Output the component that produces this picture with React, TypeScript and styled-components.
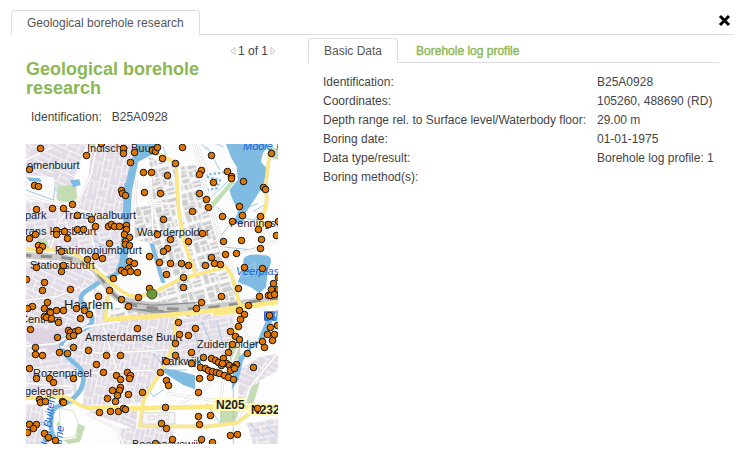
import React from "react";
import styled, { createGlobalStyle, css } from "styled-components";

const GlobalStyle = createGlobalStyle`
  * { box-sizing: border-box; }
  body {
    margin: 0;
    background: #fff;
    color: #444;
    font-family: "Liberation Sans", Arial, sans-serif;
    font-size: 12px;
    line-height: 19px;
  }
`;

const Page = styled.div`
  padding: 10px 6px 0 11px;
`;

const TopBar = styled.header`
  display: flex;
  justify-content: space-between;
  align-items: flex-start;
  border-bottom: 1px solid #ddd;
`;

const TabList = styled.div`
  display: flex;
  gap: 2px;
  border-bottom: 1px solid #ddd;
`;

const Tab = styled.button<{ $active?: boolean }>`
  height: 24px;
  padding: 0 15px;
  border: 1px solid transparent;
  border-bottom: 0;
  border-radius: 4px 4px 0 0;
  background: transparent;
  font: inherit;
  line-height: 22px;
  color: #8cb755;
  white-space: nowrap;
  cursor: pointer;
  ${(p) =>
    p.$active
      ? css`
          height: 25px;
          margin-bottom: -1px;
          border-color: #ddd;
          background: #fff;
          color: #555;
        `
      : css`
          -webkit-text-stroke: 0.4px #8cb755;
        `}
`;

const CloseButton = styled.button`
  display: flex;
  padding: 4px 3px;
  border: 0;
  background: transparent;
  cursor: pointer;
`;

const Content = styled.main`
  display: grid;
  grid-template-columns: 252px minmax(0, 1fr);
  gap: 30px;
  padding: 3px 15px 15px;
`;

const Summary = styled.section`
  padding-top: 4px;
`;

const Pager = styled.nav`
  display: flex;
  justify-content: flex-end;
  align-items: center;
  gap: 2px;
  height: 18px;
  padding-right: 2px;
`;

const PagerButton = styled.button`
  display: flex;
  padding: 0;
  border: 0;
  background: transparent;
  cursor: pointer;
`;

const Title = styled.h1`
  margin: 0;
  max-width: 200px;
  font-size: 18px;
  line-height: 19px;
  font-weight: bold;
  color: #8cb755;
`;

const SummaryFields = styled.dl`
  display: flex;
  gap: 10px;
  margin: 10px 0 17px;
  padding: 0 5px;
`;

const FieldName = styled.dt``;

const FieldValue = styled.dd`
  margin: 0;
`;

const DataTable = styled.table`
  width: 100%;
  margin-top: 10px;
  border-collapse: collapse;
`;

const DataLabel = styled.th`
  padding: 0 0 0 15px;
  font-weight: normal;
  text-align: left;
  white-space: nowrap;
`;

const DataValue = styled.td`
  width: 122px;
  padding: 0;
  white-space: nowrap;
`;

const MapSvg = styled.svg`
  display: block;
  width: 100%;
  height: auto;
`;

const MapLabel = styled.text<{ $kind?: "water" | "city" | "road" }>`
  font-family: "Liberation Sans", Arial, sans-serif;
  font-size: ${(p) => (p.$kind === "city" ? 13 : p.$kind === "road" ? 12 : 11)}px;
  font-weight: ${(p) => (p.$kind === "road" ? "bold" : "normal")};
  font-style: ${(p) => (p.$kind === "water" ? "italic" : "normal")};
  fill: ${(p) => (p.$kind === "water" ? "#1266d8" : "#1c1c1c")};
`;

const basicData: [string, string][] = [
  ["Identification:", "B25A0928"],
  ["Coordinates:", "105260, 488690 (RD)"],
  ["Depth range rel. to Surface level/Waterbody floor:", "29.00 m"],
  ["Boring date:", "01-01-1975"],
  ["Data type/result:", "Borehole log profile: 1"],
  ["Boring method(s):", ""],
];

/* Borehole positions, one "x,y" pair each. */
const boreholes = `
40,148 86,155 101,143 29,169 34,185 38,186 72,204 52,208 63,208 36,209 77,215 91,219 123,148 123,153 134,152 130,162
143,172 121,190 122,193 125,195 144,192 152,150 155,151 157,147 182,147 162,158 175,163 211,155 271,153 151,172
167,175 201,170 199,174 227,171 231,176 231,178 243,181 213,182 160,193 199,193 206,199 208,207 192,211 239,206
263,187 265,189 222,216 242,215 260,216 163,219 232,221 95,226 77,229 83,229 56,230 56,234 64,231 67,238 35,234
29,238 38,245 42,246 39,250 61,251 87,259 95,256 102,258 63,265 61,271 36,267 44,282 42,290 70,289 108,226 111,224
114,226 119,226 126,225 126,229 124,234 129,237 125,241 125,244 129,245 109,243 129,261 134,263 128,268 121,270
124,272 130,271 137,272 113,278 109,290 149,256 149,288 26,279 98,296 202,233 157,234 170,239 188,241 167,248 163,251
159,262 170,263 181,263 188,265 205,265 211,257 214,263 220,264 166,274 183,277 183,287 225,254 236,253 223,241
241,240 260,248 261,239 258,229 268,224 276,235 278,221 244,267 262,268 238,288 273,283 271,289 278,289 274,294
221,296 259,296 268,295 278,277 47,302 32,306 27,308 44,308 49,311 50,312 56,310 63,310 44,316 46,317 51,318 58,322 30,329
76,308 84,310 89,314 80,318 121,299 128,306 138,297 68,330 70,332 75,331 78,330 69,336 73,335 57,337 137,328 35,347
35,354 42,355 59,352 67,353 73,347 88,350 106,355 120,355 96,364 29,368 201,302 196,308 239,310 244,314 248,305
240,319 238,326 230,331 235,336 239,339 232,344 228,352 247,353 178,322 195,328 179,334 188,335 175,343 175,355
191,352 166,361 191,363 203,357 211,358 215,360 218,362 223,358 221,365 226,363 229,365 236,364 233,367 270,295
274,294 269,315 270,327 277,325 267,334 274,334 272,340 262,341 264,347 253,367 200,367 205,368 36,378 49,378 53,382
73,378 103,372 116,375 120,379 127,372 130,375 129,378 120,387 119,390 112,390 117,395 107,398 115,401 128,394
142,392 99,412 110,411 118,411 123,408 125,409 39,399 40,402 45,401 62,401 63,402 29,424 36,424 33,428 27,432 44,433
48,437 55,440 160,372 166,380 168,385 199,378 210,377 198,392 208,370 212,371 216,372 219,373 224,375 228,377
233,379 230,370 234,368 222,363 165,407 198,416 210,415 199,424 161,423 166,428 172,439 155,443 201,439 212,442
230,435 237,434 257,408`
  .trim()
  .split(/\s+/)
  .map((pair) => pair.split(",").map(Number));

/* Built-up areas: outline and the street pattern that fills it. */
const districts: [string, string][] = [
  ["M0 0H205L160 120 130 190 0 130Z", "streetsA"],
  ["M215 12H380L345 60 322 160 312 250 180 230 175 180 205 120Z", "streetsB"],
  ["M0 180 165 200 305 240 300 390 270 410 235 380 180 335 0 315Z", "streetsC"],
  ["M0 365 120 365 200 390 240 420 180 450 185 490 220 535 130 590 110 620 0 640Z", "streetsA"],
  ["M220 440 260 470 255 540 470 530 455 620 410 700 360 790 190 795 185 690 130 620 190 580 228 545Z", "streetsB"],
  ["M0 640 110 625 170 680 170 760 120 765 0 765Z", "streetsC"],
  ["M478 535 640 525 655 600 615 650 540 670 435 685 462 620Z", "streetsC"],
  ["M205 812H352L348 870 300 850 215 822Z", "streetsA"],
  ["M300 865H455L470 912H300Z", "streetsB"],
  ["M655 690 720 650 774 640V690L710 730 680 790 655 790Z", "streetsA"],
  ["M0 790 70 795 75 912H0Z", "streetsB"],
  ["M680 850 774 835V912H700Z", "streetsC"],
];

const industry = [
  "M385 50 465 75 470 190 400 190 395 110Z",
  "M345 200 465 195 480 300 510 395 430 420 405 310 345 300Z",
  "M482 80 530 75 560 200 610 370 530 395 490 280Z",
  "M400 450 520 410 630 390 650 480 520 500 420 500Z",
  "M275 500 400 520 400 530 270 535Z",
  "M480 510 580 508 580 530 480 532Z",
];

const fieldLines =
  "M560 20 600 90M575 170 650 100M590 200 640 250M600 290 650 230 750 250M610 20 590 12M735 210 700 240M740 190 700 215M715 190 690 200M600 320 700 330 774 300M610 350 720 320M560 30 545 12M630 440 650 470M520 560 540 640M545 545 570 600 520 650M590 540 610 620M400 640 440 690 500 690M660 650 720 600M380 740 400 770 430 750M640 740 640 912M560 790 600 850M740 860 774 890M690 850 730 890M18 150 100 180 105 140M430 20 440 60M20 840 80 850M270 330 220 300M365 12 390 40M690 60 720 20M700 30 690 90";

const rail = "M0 345 120 352C190 360 215 375 240 410S280 475 330 492 450 508 550 505L774 475";

const river =
  "M325 150 318 260 310 365C305 410 260 410 230 432S175 460 185 485 230 530 212 552 150 580 130 602 140 650 170 675 195 740 165 770 100 790 95 825 90 875 115 915";

const waterBodies = [
  "M350 12H418L400 42 355 65 342 125 332 170 308 170 325 95Z",
  "M618 12H746L728 42 723 65 742 88 728 140 704 178 676 220 668 255 642 248 654 215 635 172 628 150 653 120 650 80 634 55Z",
  "M670 368C665 340 710 342 730 346 758 345 758 365 744 390L738 442 718 460 690 440 653 427 668 390Z",
  "M774 535 758 540 740 590 695 626 670 660 655 720 635 750 638 700 658 650 715 595 748 520 774 510Z",
  "M430 685 465 690 525 706 525 748 490 735 435 700Z",
  "M388 310 402 310 436 428 424 430Z",
  "M150 120 178 118 182 135 160 142Z",
  "M20 112 60 115 65 126 28 124Z",
];

const parks = [
  "M112 138 168 134 172 175 155 190 112 180Z",
  "M208 12 232 12 226 25 208 22Z",
  "M625 625 660 600 662 655 630 665Z",
  "M568 195 640 115 645 125 575 210Z",
  "M750 450 774 440V475L745 475Z",
  "M600 800 655 800 650 845 600 850Z",
  "M118 780 148 775 160 792 118 800Z",
  "M112 845 140 845 145 870 112 872Z",
  "M175 850 195 860 180 905 145 912 130 900 168 895Z",
  "M745 15 774 30V60L750 50Z",
  "M50 300 70 325 90 325 75 295Z",
  "M695 740 720 725 700 790 680 790Z",
];

const minorRoads =
  "M230 12 215 100 178 180 120 240 90 330M18 60 100 20M18 170 160 205 310 245M110 190 200 235 225 330M395 100 390 190 470 190M395 190 400 300M530 12 560 90 545 140 610 360 650 400M520 12 575 200 630 390M600 350 700 330 774 300M18 480 110 470 180 440M18 620 110 610 200 560 300 545M120 620 240 640 440 630M190 700 400 690M18 690 160 690M250 560 290 690 350 800M200 820 290 865 310 912M640 530 660 610 610 720 600 800M774 640 690 740 670 800 640 860M480 790 540 760 600 700M18 730 160 740M440 760 640 790M670 480 774 530M740 610 680 590 665 510M350 120 342 250 325 400";

const mainRoads =
  "M0 325 100 330C180 330 185 360 225 390S280 440 315 460 375 462 405 455L480 418 618 380 635 405 662 505M405 38 468 68 475 200 490 300 525 398M268 448 255 540 400 530 600 508 774 485M580 522 650 515 665 490M470 530 460 620 420 700 370 780 360 858 560 860 650 848 712 805M0 775 125 770C160 772 165 800 205 803L360 805 580 800 700 802M748 45 738 130 740 185 720 270M635 600 655 550 662 505";

function Arrow({ flip }: { flip?: boolean }) {
  return (
    <svg width="6" height="10" viewBox="0 0 6 10" aria-hidden="true">
      <path
        d={flip ? "M1 1.5 5 5 1 8.5Z" : "M5 1.5 1 5 5 8.5Z"}
        fill="#fff"
        stroke="#c8c8c8"
      />
    </svg>
  );
}

function StreetPattern({ id, angle, size }: { id: string; angle: number; size: number }) {
  return (
    <pattern
      id={id}
      width={size}
      height={size}
      patternUnits="userSpaceOnUse"
      patternTransform={`rotate(${angle})`}
    >
      <rect width={size} height={size} fill="#e2dce6" />
      <path
        d={`M0 2H${size}M0 ${size * 0.28}H${size * 0.6}M0 ${size * 0.52}H${size}M${size * 0.3} ${size * 0.76}H${size}M3 0V${size * 0.52}M${size * 0.6} 0V${size * 0.52}M${size * 0.3} ${size * 0.52}V${size}`}
        stroke="#faf9fb"
        strokeWidth="3"
        fill="none"
      />
    </pattern>
  );
}

function BoreholeMap() {
  return (
    <MapSvg viewBox="0 0 252 300" role="img" aria-label="Map of boreholes around Haarlem">
      <defs>
        <StreetPattern id="streetsA" angle={24} size={66} />
        <StreetPattern id="streetsB" angle={102} size={58} />
        <StreetPattern id="streetsC" angle={-9} size={62} />
        <pattern
          id="sheds"
          width="82"
          height="96"
          patternUnits="userSpaceOnUse"
          patternTransform="rotate(-16)"
        >
          <rect width="82" height="96" fill="#f9f9f9" />
          <path d="M4 4h22v12H4zM30 3h12v26H30zM46 6h32v9H46zM50 19h26v14H50zM5 20h18v18H5zM6 43h36v9H6zM28 33h15v6H28zM50 38h10v20H50zM64 37h13v10H64zM64 52h13v14H64zM5 57h14v32H5zM24 58h20v12H24zM25 75h10v15H25zM40 74h8v15h-8zM52 71h25v8H52zM53 83h24v7H53z" fill="#cecece" />
          <path d="M46 0V96M0 40H82" stroke="#e8e3e3" strokeWidth="2" />
        </pattern>
      </defs>
      <rect width="252" height="300" fill="#fdfdfd" />

      <g transform="translate(-6 -4) scale(0.33333)" fill="none" strokeLinejoin="round">
        {districts.map(([d, street]) => (
          <path key={d} d={d} fill={`url(#${street})`} />
        ))}
        <path d="M18 560 110 570 180 540 130 590 110 640 18 600Z" fill="#ddd3e1" />
        <path d="M20 105 100 112 110 180 20 165Z" fill="#fbfbfb" />
        {industry.map((d) => (
          <path key={d} d={d} fill="url(#sheds)" />
        ))}
        {parks.map((d) => (
          <path key={d} d={d} fill="#c4dcb4" />
        ))}
        <path d={fieldLines} stroke="#9fcbe6" strokeWidth="3" />
        <path d="M555 105 625 95M560 150 590 145 600 120 560 110" stroke="#7fbce2" strokeWidth="7" strokeDasharray="7 6" />
        <path d={river} stroke="#80bce2" strokeWidth="14" />
        <path d="M325 130 318 260 310 365 298 395" stroke="#80bce2" strokeWidth="24" />
        {waterBodies.map((d) => (
          <path key={d} d={d} fill="#80bce2" />
        ))}
        <path d="M665 390 705 370 705 400 675 410" stroke="#b9dced" strokeWidth="2" />
        <path d={minorRoads} stroke="#ddd5d9" strokeWidth="8" />
        <path d={minorRoads} stroke="#fff" strokeWidth="5" />
        <path d="M290 465 380 485 520 490 560 500 480 518 380 524 320 508Z" fill="#c8c8c8" />
        <path d={rail} stroke="#cbcbcb" strokeWidth="20" />
        <path d={rail} stroke="#8e8e8e" strokeWidth="9" strokeDasharray="34 28" />
        <path d="M300 484 400 496 530 488M310 502 400 516 540 516M350 508 430 512" stroke="#909090" strokeWidth="4" />
        <path d={mainRoads} stroke="#efdc94" strokeWidth="11" />
        <path d={mainRoads} stroke="#fde983" strokeWidth="8" />
        <path d="M255 538 400 529 600 510 774 486M195 803 360 805 580 800" stroke="#fde983" strokeWidth="14" />
        <path d="M118 805 160 812 175 850 165 890 130 895 120 860Z" fill="#fff" stroke="#d5e3cb" strokeWidth="3" />
        <path d="M368 818H465V852H368ZM385 828h20v10h-20zM415 825h30v14h-30z" fill="#f5f5f5" stroke="#cfcfcf" strokeWidth="2" />
        <path d="M734 516H762V538H734Z" fill="#a5cdf0" stroke="#2f66d6" strokeWidth="4" />
      </g>

      <MapLabel x="61" y="8">Indische Buurt</MapLabel>
      <MapLabel x="1" y="25">omenbuurt</MapLabel>
      <MapLabel x="-1" y="75">park</MapLabel>
      <MapLabel x="37" y="75">Transvaalbuurt</MapLabel>
      <MapLabel x="-1" y="91">rans Halsbuurt</MapLabel>
      <MapLabel x="111" y="92">Waarderpolder</MapLabel>
      <MapLabel x="204" y="83">Penningsveer</MapLabel>
      <MapLabel x="29" y="110">Patrimoniumbuurt</MapLabel>
      <MapLabel x="4" y="125">Stationsbuurt</MapLabel>
      <MapLabel $kind="city" x="38" y="165">Haarlem</MapLabel>
      <MapLabel x="-6" y="179">Centrum</MapLabel>
      <MapLabel x="59" y="197">Amsterdamse Buurt</MapLabel>
      <MapLabel x="171" y="204">Zuiderpolder</MapLabel>
      <MapLabel x="135" y="221">Parkwijk</MapLabel>
      <MapLabel x="7" y="233">Rozenprieel</MapLabel>
      <MapLabel x="-1" y="251">gelegen</MapLabel>
      <MapLabel x="106" y="304">Boerhaavewijk</MapLabel>
      <MapLabel x="-3" y="303">t</MapLabel>
      <MapLabel $kind="water" x="217" y="6">Mooie Nel</MapLabel>
      <MapLabel $kind="water" x="210" y="131">Veerplas</MapLabel>
      <MapLabel $kind="water" x="238" y="177">Bui</MapLabel>
      <MapLabel $kind="water" transform="translate(22 305) rotate(-82)">den Buiten</MapLabel>
      <MapLabel $kind="water" transform="translate(35 304) rotate(-82)">arne</MapLabel>

      <g transform="translate(-26 -144)" fill="#dd7500" stroke="#17120c" strokeWidth="1">
        {boreholes.map(([x, y], i) => (
          <circle key={i} cx={x + 0.5} cy={y + 0.5} r="3.3" />
        ))}
      </g>
      <circle cx="126" cy="150" r="5" fill="#6c963a" stroke="#34501b" />

      <path d="M187 254H219V267H187ZM222 260H251V271H222Z" fill="#fff9b5" />
      <MapLabel $kind="road" x="190" y="265">N205</MapLabel>
      <MapLabel $kind="road" x="225" y="270">N232</MapLabel>
      <circle cx="231.5" cy="264.5" r="3.3" fill="#dd7500" stroke="#17120c" />
    </MapSvg>
  );
}

export default function App() {
  return (
    <>
      <GlobalStyle />
      <Page>
        <TopBar>
          <Tab $active type="button">Geological borehole research</Tab>
          <CloseButton type="button" aria-label="Close">
            <svg width="13" height="13" viewBox="0 0 13 13" aria-hidden="true">
              <path d="M2 2 11 11M11 2 2 11" stroke="#000" strokeWidth="3" />
            </svg>
          </CloseButton>
        </TopBar>
        <Content>
          <Summary>
            <Pager aria-label="Results">
              <PagerButton type="button" aria-label="Previous"><Arrow /></PagerButton>
              <span>1 of 1</span>
              <PagerButton type="button" aria-label="Next"><Arrow flip /></PagerButton>
            </Pager>
            <Title>Geological borehole research</Title>
            <SummaryFields>
              <FieldName>Identification:</FieldName>
              <FieldValue>B25A0928</FieldValue>
            </SummaryFields>
            <BoreholeMap />
          </Summary>
          <section>
            <TabList role="tablist">
              <Tab $active type="button" role="tab" aria-selected="true">Basic Data</Tab>
              <Tab type="button" role="tab" aria-selected="false">Borehole log profile</Tab>
            </TabList>
            <DataTable>
              <tbody>
                {basicData.map(([label, value]) => (
                  <tr key={label}>
                    <DataLabel scope="row">{label}</DataLabel>
                    <DataValue>{value}</DataValue>
                  </tr>
                ))}
              </tbody>
            </DataTable>
          </section>
        </Content>
      </Page>
    </>
  );
}
